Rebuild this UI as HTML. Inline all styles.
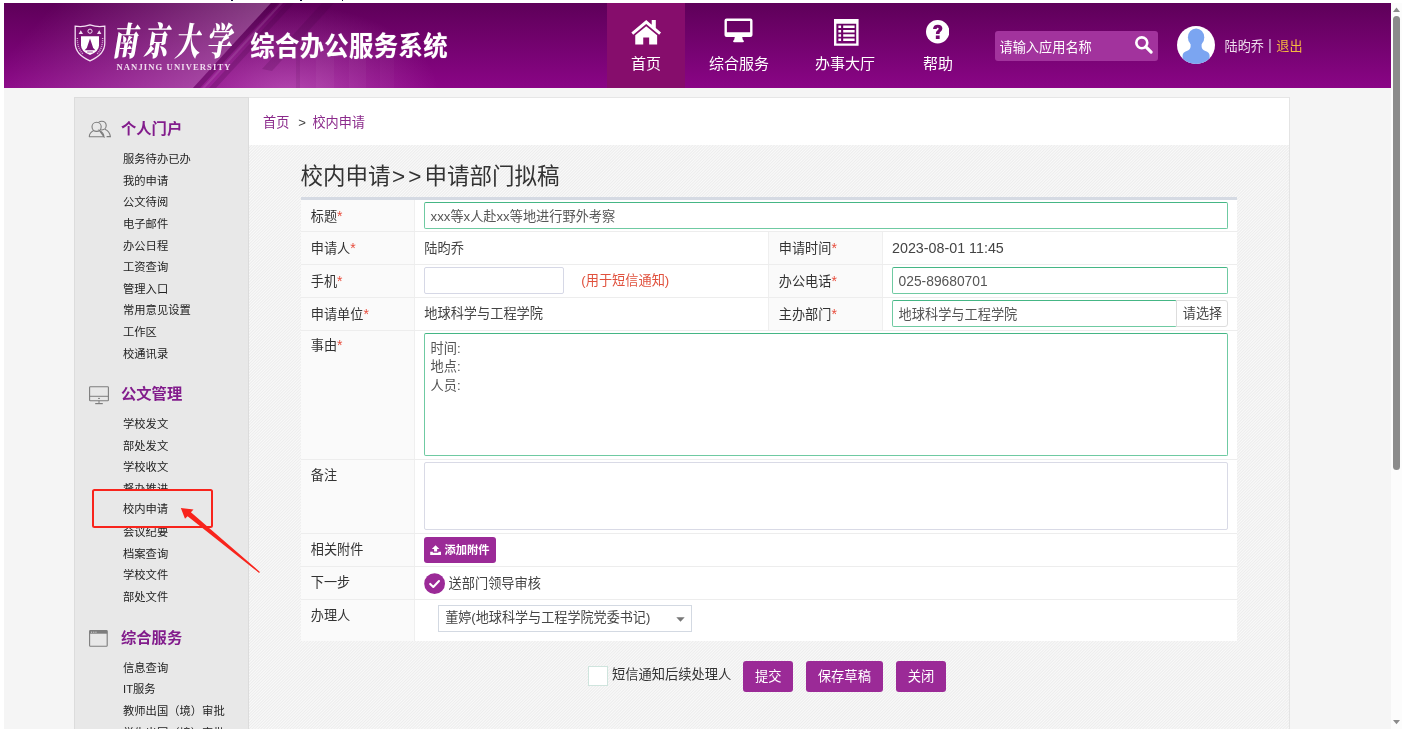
<!DOCTYPE html>
<html lang="zh-CN">
<head>
<meta charset="utf-8">
<title>综合办公服务系统</title>
<style>
*{box-sizing:border-box;margin:0;padding:0}
html,body{width:1419px;height:739px;overflow:hidden;background:#fff}
body{font-family:"Liberation Sans","Noto Sans CJK SC",sans-serif;color:#333;position:relative}
#vp{position:absolute;left:4px;top:3px;width:1387px;height:726px;background:#f5f5f5;overflow:hidden}
#all{position:absolute;left:0;top:0;width:1419px;height:739px;background:#fff;will-change:transform;overflow:hidden}
.abs{position:absolute}
/* header */
#hd{position:absolute;left:0;top:0;width:1387px;height:85px;background:linear-gradient(180deg,#5e0059 0%,#8a0586 100%);overflow:hidden}
#hd .t{position:absolute;color:#fff;white-space:nowrap}
.nav{position:absolute;top:0;height:85px;color:#fff;text-align:center;font-size:15px}
.nav span{position:absolute;left:0;right:0;top:50.7px;line-height:20px}
/* sidebar */
#sb{position:absolute;left:70px;top:94px;width:175px;height:640px;background:#e8e8e8;border:1px solid #dcdcdc}
#sb .h{position:absolute;left:46px;color:#821c8c;font-weight:bold;font-size:15.3px;line-height:20px;white-space:nowrap}
#sb .i{position:absolute;left:48px;color:#222;font-size:11.3px;line-height:16px;white-space:nowrap}
/* main */
#mn{position:absolute;left:245px;top:94px;width:1041px;height:640px;border-right:1px solid #e4e4e4;background:#f4f4f4;
 }
#bc{position:absolute;left:0;top:0;width:1040px;height:48px;background:#fff;border-top:1px solid #e6e6e6;font-size:13.15px;line-height:49px;padding-left:14px;color:#8b2a8b;white-space:nowrap}
#ttl{position:absolute;left:51.6px;top:65px;font-size:22.5px;line-height:30px;color:#333;white-space:nowrap}
#tb{position:absolute;left:52px;top:100px;width:936.4px;height:444px;background:#fff;border-top:3px solid #d5dae3}
.row{position:absolute;left:0;width:936.4px;border-bottom:1px solid #ededed}
.lb{position:absolute;top:0;bottom:0;background:#fafafa;border-right:1px solid #efefef;font-size:13.15px;padding-left:9.8px;color:#333;white-space:nowrap}
.lb b{color:#e74c3c;font-weight:normal;font-size:14px}
.v{position:absolute;font-size:13.2px;color:#444;white-space:nowrap}
.in{position:absolute;border:1px solid #6fcaa2;border-top-color:#45b685;background:#fff;border-radius:2px;font-size:13.2px;color:#555;padding-left:5.6px;white-space:nowrap}
.btn{position:absolute;background:#9b2a97;color:#fff;border-radius:3px;text-align:center;white-space:nowrap}
</style>
</head>
<body>
<div id="all">
<div id="vp">
<div id="hd">
 <svg class="abs" style="left:0;top:0" width="520" height="85" viewBox="0 0 520 85">
  <defs>
   <linearGradient id="hg1" gradientUnits="userSpaceOnUse" x1="267" y1="0" x2="149" y2="-108"><stop offset="0" stop-color="#fff" stop-opacity=".25"/><stop offset=".5" stop-color="#fff" stop-opacity=".12"/><stop offset="1" stop-color="#fff" stop-opacity="0"/></linearGradient>
   <radialGradient id="hg2" gradientUnits="userSpaceOnUse" cx="285" cy="92" r="150" gradientTransform="translate(0 36.8) scale(1 .6)"><stop offset="0" stop-color="#f4b0f0" stop-opacity=".38"/><stop offset=".55" stop-color="#f4b0f0" stop-opacity=".16"/><stop offset="1" stop-color="#f4b0f0" stop-opacity="0"/></radialGradient>
  </defs>
  <polygon points="0,0 267,0 189,85 0,85" fill="url(#hg1)"/>
  <polygon points="267,0 520,0 520,85 189,85" fill="url(#hg2)"/>
  <polygon points="267,0 274,0 196,85 189,85" fill="rgba(60,0,60,.30)"/>
  <polygon points="276,0 279,0 201,85 198,85" fill="rgba(255,255,255,.10)"/>
  <polygon points="283,0 290,0 212,85 205,85" fill="rgba(60,0,60,.20)"/>
  <polygon points="318,0 330,0 268,68 258,66" fill="rgba(60,0,60,.18)"/>
  <polygon points="292,85 292,40 296,40 296,85" fill="rgba(60,0,60,.10)"/>
  <polygon points="312,85 312,45 330,38 330,85" fill="rgba(255,255,255,.035)"/>
  <polygon points="345,85 345,42 362,36 362,85" fill="rgba(255,255,255,.03)"/>
  <polygon points="376,85 376,46 390,42 390,85" fill="rgba(255,255,255,.025)"/>
 </svg>
 <svg class="abs" style="left:70px;top:21px" width="32" height="38" viewBox="0 0 32 38">
  <path d="M1.2 2.2 Q8.5 3.6 16 0.9 Q23.5 3.6 30.8 2.2 L30.8 19 Q30.8 30.5 16 36.8 Q1.2 30.5 1.2 19 Z" fill="none" stroke="#f3dff2" stroke-width="1.3"/>
  <path d="M7 12.2 L25 12.2 L25 21.5 Q25 27.5 16 31 Q7 27.5 7 21.5 Z" fill="#fff"/>
  <path d="M16 14.5 L19.2 24 L21.4 26.2 L10.6 26.2 L12.8 24 Z" fill="#7a1478"/>
  <rect x="13.2" y="27.4" width="5.6" height="1.2" fill="#b070b0"/>
  <circle cx="16" cy="7.2" r="2.1" fill="none" stroke="#f3dff2" stroke-width="1"/>
  <path d="M4.6 10 L6.8 6.2 L9 10 Z M23 10 L25.2 6.2 L27.4 10 Z" fill="#f3dff2"/>
  <path d="M3.4 14 Q3 24 9 30 M28.6 14 Q29 24 23 30" fill="none" stroke="#d9b0d8" stroke-width="1.4" stroke-dasharray="1 1"/>
 </svg>
 <div class="t" id="cal" style="left:108px;top:19.5px;font-family:'Liberation Serif','Noto Serif CJK SC',serif;font-weight:900;font-style:italic;font-size:25px;line-height:40px;letter-spacing:6.3px;transform:scaleY(1.52);transform-origin:0 50%">南京大学</div>
 <div class="t" id="nju" style="left:112.5px;top:57.7px;font-family:'Liberation Serif',serif;font-weight:bold;font-size:8.6px;line-height:12px;letter-spacing:1.1px;color:#f0dcef">NANJING UNIVERSITY</div>
 <div class="t" id="sys" style="left:246.3px;top:26.9px;font-size:24.4px;font-weight:bold;line-height:34px;letter-spacing:.3px;transform:scaleY(1.1);transform-origin:0 50%;text-shadow:0 0 1px rgba(255,255,255,.4)">综合办公服务系统</div>

 <div class="nav" style="left:603px;width:78px;background:#860d6c">
  <svg class="abs" style="left:23.2px;top:15.6px" width="32.4" height="26.6" viewBox="0 0 31 26"><path d="M15.5 1 L1 13.2 L2.8 15.3 L15.5 4.8 L28.2 15.3 L30 13.2 L24.9 8.9 L24.9 0.9 L20.9 0.9 L20.9 5.5 Z" fill="#fff"/><path d="M15.5 7 L4.8 15.9 L4.8 25 L12.6 25 L12.6 18 L18.4 18 L18.4 25 L26.2 25 L26.2 15.9 Z" fill="#fff"/></svg>
  <span>首页</span></div>
 <div class="nav" style="left:695px;width:80px">
  <svg class="abs" style="left:24.6px;top:15.3px" width="29" height="25" viewBox="0 0 29 25"><path d="M2.6 0.5 H26.4 Q28.5 0.5 28.5 2.6 V17 Q28.5 19.1 26.4 19.1 H18.2 L18.9 22 Q19.9 22.3 19.9 23.2 Q19.9 24.2 18.9 24.2 H10.1 Q9.1 24.2 9.1 23.2 Q9.1 22.3 10.1 22 L10.8 19.1 H2.6 Q0.5 19.1 0.5 17 V2.6 Q0.5 0.5 2.6 0.5 Z M2.9 2.9 V14.3 H26.1 V2.9 Z" fill="#fff" fill-rule="evenodd"/></svg>
  <span>综合服务</span></div>
 <div class="nav" style="left:801px;width:80px">
  <svg class="abs" style="left:29.4px;top:16.2px" width="24.6" height="26.8" viewBox="0 0 24.6 26.8"><path d="M0 0 H24.6 V26.8 H0 Z M2.4 4.7 V24.4 H22.2 V4.7 Z" fill="#fff" fill-rule="evenodd"/><path d="M4.4 6.6h2.7v2.5h-2.7z M9.2 6.6h11.4v2.5H9.2z M4.4 10.9h2.7v2.5h-2.7z M9.2 10.9h11.4v2.5H9.2z M4.4 15.2h2.7v2.5h-2.7z M9.2 15.2h11.4v2.5H9.2z M4.4 19.6h2.7v2.5h-2.7z M9.2 19.6h11.4v2.5H9.2z " fill="#fff"/></svg>
  <span>办事大厅</span></div>
 <div class="nav" style="left:894px;width:80px">
  <svg class="abs" style="left:28px;top:17.3px" width="23.4" height="23.4" viewBox="0 0 24 24"><circle cx="12" cy="12" r="12" fill="#fff"/><path d="M7.2 9.3 Q7.4 4.9 12.1 4.9 Q16.8 4.9 16.8 8.8 Q16.8 10.9 14.9 12 Q13.9 12.6 13.9 13.7 V14.4 H10.2 V13.4 Q10.2 11.4 11.9 10.4 Q13 9.8 13 8.9 Q13 8 12 8 Q11 8 10.9 9.3 Z M10.1 15.9 H14 V19.6 H10.1 Z" fill="#74086f"/></svg>
  <span>帮助</span></div>

 <div class="abs" style="left:991px;top:28.4px;width:163px;height:29.7px;background:#a2339d;border-radius:3px"></div>
 <div class="t" style="left:995.5px;top:36px;font-size:13.2px;line-height:18px">请输入应用名称</div>
 <svg class="abs" style="left:1130px;top:32.4px" width="19.5" height="19.5" viewBox="0 0 20 20"><circle cx="8" cy="8" r="5.6" fill="none" stroke="#fff" stroke-width="2.7"/><path d="M12.2 12.2 L17.6 17.6" stroke="#fff" stroke-width="3.2" stroke-linecap="round"/></svg>
 <svg class="abs" style="left:1172.8px;top:22.8px" width="38" height="38" viewBox="0 0 38 38"><defs><clipPath id="avc"><circle cx="19" cy="19" r="19"/></clipPath></defs><circle cx="19" cy="19" r="19" fill="#fff"/><g clip-path="url(#avc)" fill="#7ba5f1"><ellipse cx="19.1" cy="11.4" rx="8.2" ry="8.9"/><path d="M13.6 16 H24.6 V20.5 Q24.8 23.6 28.4 24.9 Q32.4 26.2 32.6 29.5 V40 H5.6 V29.5 Q5.8 26.2 9.8 24.9 Q13.4 23.6 13.6 20.5 Z"/></g></svg>
 <div class="t" style="left:1220.6px;top:34px;font-size:13.1px;line-height:18px;color:#ecdbeb">陆昀乔<span style="color:#d4bcdc;font-size:15px;margin:0 4.4px 0 4.2px;position:relative;top:-1px">|</span><span style="color:#f6b840">退出</span></div>
</div>
<div id="sb">
<div class="h" style="top:21.3px">个人门户</div><svg class="abs" style="left:12.6px;top:22px" width="24" height="18" viewBox="0 0 24 18"><g fill="none" stroke="#7d7d7d" stroke-width="1.1"><circle cx="13.8" cy="5.6" r="4.4"/><path d="M16.8 9.2 Q21.6 11 22.4 16.6 H18.6"/><circle cx="8.6" cy="6.8" r="4.6" fill="#e8e8e8"/><path d="M1.2 16.8 Q1.6 12.4 5.8 10.6 M11.4 10.6 Q15.6 12.4 16 16.8 Z M1 16.8 H16.2"/></g></svg>
<div class="i" style="top:53.0px">服务待办已办</div>
<div class="i" style="top:74.7px">我的申请</div>
<div class="i" style="top:96.3px">公文待阅</div>
<div class="i" style="top:118.0px">电子邮件</div>
<div class="i" style="top:139.6px">办公日程</div>
<div class="i" style="top:161.2px">工资查询</div>
<div class="i" style="top:182.8px">管理入口</div>
<div class="i" style="top:204.4px">常用意见设置</div>
<div class="i" style="top:226.0px">工作区</div>
<div class="i" style="top:247.7px">校通讯录</div>
<div class="h" style="top:286.4px">公文管理</div><svg class="abs" style="left:14.2px;top:288px" width="20" height="19" viewBox="0 0 20 19"><g fill="none" stroke="#7d7d7d" stroke-width="1.1"><rect x="0.6" y="0.7" width="18.8" height="14" rx="0.8"/><path d="M0.6 10.3 H19.4 M10 14.7 V17.4" stroke-width="1"/><path d="M6.2 17.6 H13.8" stroke-width="1.2"/></g><ellipse cx="10" cy="12.4" rx="1" ry=".6" fill="#7d7d7d"/></svg>
<div class="i" style="top:318.2px">学校发文</div>
<div class="i" style="top:339.8px">部处发文</div>
<div class="i" style="top:361.4px">学校收文</div>
<div class="i" style="top:383.0px">督办推进</div>
<div class="i" style="top:404.6px">校内申请</div>
<div class="i" style="top:426.2px">会议纪要</div>
<div class="i" style="top:447.8px">档案查询</div>
<div class="i" style="top:469.4px">学校文件</div>
<div class="i" style="top:491.0px">部处文件</div>
<div class="h" style="top:530.0px">综合服务</div><svg class="abs" style="left:14.1px;top:532.2px" width="18.8" height="16.8" viewBox="0 0 18.8 16.8"><rect x="0.6" y="0.6" width="17.6" height="15.6" rx="0.8" fill="none" stroke="#7d7d7d" stroke-width="1.1"/><rect x="0.6" y="0.6" width="17.6" height="3.1" fill="#7d7d7d"/><path d="M2 2.2h1.1M4.2 2.2h1.1M6.4 2.2h1.1" stroke="#e8e8e8" stroke-width=".9"/></svg>
<div class="i" style="top:561.8px">信息查询</div>
<div class="i" style="top:583.4px">IT服务</div>
<div class="i" style="top:605.0px">教师出国（境）审批</div>
<div class="i" style="top:626.6px">学生出国（境）审批</div>
</div>
<div id="mn">
<svg class="abs" style="left:0;top:48px" width="1040" height="592"><defs><pattern id="ht" width="73" height="73" patternUnits="userSpaceOnUse"><rect width="73" height="73" fill="#fafafa"/><path d="M1.00 -1L-1 1.00M3.92 -1L-1 3.92M6.84 -1L-1 6.84M9.76 -1L-1 9.76M12.68 -1L-1 12.68M15.60 -1L-1 15.60M18.52 -1L-1 18.52M21.44 -1L-1 21.44M24.36 -1L-1 24.36M27.28 -1L-1 27.28M30.20 -1L-1 30.20M33.12 -1L-1 33.12M36.04 -1L-1 36.04M38.96 -1L-1 38.96M41.88 -1L-1 41.88M44.80 -1L-1 44.80M47.72 -1L-1 47.72M50.64 -1L-1 50.64M53.56 -1L-1 53.56M56.48 -1L-1 56.48M59.40 -1L-1 59.40M62.32 -1L-1 62.32M65.24 -1L-1 65.24M68.16 -1L-1 68.16M71.08 -1L-1 71.08M74.00 -1L-1 74.00M76.92 -1L-1 76.92M79.84 -1L-1 79.84M82.76 -1L-1 82.76M85.68 -1L-1 85.68M88.60 -1L-1 88.60M91.52 -1L-1 91.52M94.44 -1L-1 94.44M97.36 -1L-1 97.36M100.28 -1L-1 100.28M103.20 -1L-1 103.20M106.12 -1L-1 106.12M109.04 -1L-1 109.04M111.96 -1L-1 111.96M114.88 -1L-1 114.88M117.80 -1L-1 117.80M120.72 -1L-1 120.72M123.64 -1L-1 123.64M126.56 -1L-1 126.56M129.48 -1L-1 129.48M132.40 -1L-1 132.40M135.32 -1L-1 135.32M138.24 -1L-1 138.24M141.16 -1L-1 141.16M144.08 -1L-1 144.08M147.00 -1L-1 147.00" stroke="#ededed" stroke-width="1.03" fill="none"/></pattern></defs><rect width="1040" height="592" fill="url(#ht)"/></svg>
 <div id="bc">首页<span style="color:#444;margin:0 6.4px 0 9px">&gt;</span>校内申请</div>
 <div id="ttl">校内申请<span style="margin-left:1.5px;letter-spacing:3.0px">&gt;&gt;</span>申请部门拟稿</div>
 <div id="tb">
<div class="row" style="top:0px;height:32px;">
 <div class="lb" style="left:0;width:114px;line-height:32px">标题<b>*</b></div>
</div>
<div class="row" style="top:32px;height:33px;">
 <div class="lb" style="left:0;width:114px;line-height:32px">申请人<b>*</b></div>
 <div class="lb" style="left:467px;width:115px;line-height:32px;border-left:1px solid #efefef;padding-left:9.8px">申请时间<b>*</b></div>
</div>
<div class="row" style="top:65px;height:33px;">
 <div class="lb" style="left:0;width:114px;line-height:32px">手机<b>*</b></div>
 <div class="lb" style="left:467px;width:115px;line-height:32px;border-left:1px solid #efefef;padding-left:9.8px">办公电话<b>*</b></div>
</div>
<div class="row" style="top:98px;height:33px;">
 <div class="lb" style="left:0;width:114px;line-height:32px">申请单位<b>*</b></div>
 <div class="lb" style="left:467px;width:115px;line-height:32px;border-left:1px solid #efefef;padding-left:9.8px">主办部门<b>*</b></div>
</div>
<div class="row" style="top:131px;height:129px;">
 <div class="lb" style="left:0;width:114px;line-height:29.4px">事由<b>*</b></div>
</div>
<div class="row" style="top:260px;height:74px;">
 <div class="lb" style="left:0;width:114px;line-height:32.6px">备注</div>
</div>
<div class="row" style="top:334px;height:33px;">
 <div class="lb" style="left:0;width:114px;line-height:32px">相关附件</div>
</div>
<div class="row" style="top:367px;height:33px;">
 <div class="lb" style="left:0;width:114px;line-height:32px">下一步</div>
</div>
<div class="row" style="top:400px;height:41px;border-bottom:0;">
 <div class="lb" style="left:0;width:114px;line-height:32px">办理人</div>
</div>
<div class="in" style="left:123px;top:2px;width:804px;height:27px;line-height:27.6px;">xxx等x人赴xx等地进行野外考察</div>
<div class="v" style="left:123.3px;top:38.6px;line-height:20px;">陆昀乔</div>
<div class="v" style="left:591.0px;top:38.4px;line-height:20px;font-size:14.3px;color:#444">2023-08-01 11:45</div>
<div class="in" style="left:123px;top:67px;width:140px;height:27px;line-height:27.6px;border-color:#d6d8e6;box-shadow:none"></div>
<div class="v" style="left:280.3px;top:71.4px;line-height:20px;color:#e0513d">(用于短信通知)</div>
<div class="in" style="left:591px;top:67px;width:336px;height:27px;line-height:27.6px;font-size:13.8px">025-89680701</div>
<div class="v" style="left:123.3px;top:104.0px;line-height:20px;">地球科学与工程学院</div>
<div class="in" style="left:591px;top:100px;width:285px;height:27px;line-height:27.6px;">地球科学与工程学院</div>
<div class="abs" style="left:875px;top:100px;width:52px;height:27px;border:1px solid #ddd;border-radius:0 3px 3px 0;background:#fff;font-size:13.1px;line-height:26px;text-align:center;color:#444;white-space:nowrap;padding-left:1px">请选择</div>
<div class="in" style="left:123px;top:133px;width:804px;height:123px;padding-top:5.6px;line-height:18.6px;font-size:13.2px">时间:<br>地点:<br>人员:</div>
<div class="in" style="left:123px;top:262px;width:804px;height:68px;border-color:#d9dae6;box-shadow:none"></div>
<div class="btn" style="left:123.39999999999998px;top:337px;width:71.5px;height:26.2px;font-size:11.25px;line-height:26px;font-weight:bold;text-align:left;padding-left:20.2px"><svg class="abs" style="left:5.6px;top:7.9px" width="11.2" height="10.2" viewBox="0 0 11 10"><path d="M5.5 0.2 L9.2 4 H7 V6.4 H4 V4 H1.8 Z M0.2 6.6 H2.8 V7.6 H8.2 V6.6 H10.8 V9.8 H0.2 Z" fill="#fff"/></svg>添加附件</div>
<svg class="abs" style="left:123px;top:372.6px" width="22" height="22" viewBox="0 0 22 22"><circle cx="10.6" cy="10.7" r="10.4" fill="#9b2a97"/><path d="M6.2 10.9 L9.3 13.9 L15 8" fill="none" stroke="#fff" stroke-width="2.1" stroke-linecap="round" stroke-linejoin="round"/></svg>
<div class="v" style="left:147.6px;top:373.6px;line-height:20px;">送部门领导审核</div>
<div class="abs" style="left:137px;top:405px;width:253.5px;height:27px;border:1px solid #d3d9e2;background:#fff;font-size:13.1px;line-height:24.6px;padding-left:6.2px;color:#444;white-space:nowrap">董婷(地球科学与工程学院党委书记)<svg class="abs" style="left:236.5px;top:10.6px" width="9" height="5" viewBox="0 0 9 5"><path d="M0.3 0.2 H8.7 L4.5 4.8 Z" fill="#777"/></svg></div>
</div>
<div class="abs" style="left:339px;top:569px;width:20px;height:20px;background:#fff;border:1px solid #cfe4dd"></div>
<div class="abs" style="left:363.0px;top:568.0px;font-size:13.25px;line-height:20px;color:#333;white-space:nowrap">短信通知后续处理人</div>
<div class="btn" style="left:494.0px;top:564.0px;width:50.4px;height:31px;font-size:13.3px;line-height:31px">提交</div>
<div class="btn" style="left:557.0px;top:564.0px;width:76.7px;height:31px;font-size:13.3px;line-height:31px">保存草稿</div>
<div class="btn" style="left:647.0px;top:564.0px;width:50.0px;height:31px;font-size:13.3px;line-height:31px">关闭</div>
</div>
</div>
<!-- scrollbar -->
<div class="abs" style="left:1391px;top:3px;width:10.8px;height:725.7px;background:#fcfcfc"></div>
<div class="abs" style="left:1393px;top:16px;width:7px;height:453.8px;background:#8b8b8b;border-radius:3.5px"></div>
<svg class="abs" style="left:1392px;top:6px" width="9" height="8" viewBox="0 0 9 8"><path d="M4.5 1.4 L8 6 H1 Z" fill="#8b8b8b"/></svg>
<svg class="abs" style="left:1392px;top:718px" width="9" height="8" viewBox="0 0 9 8"><path d="M1 2 H8 L4.5 6.3 Z" fill="#8b8b8b"/></svg>
<!-- crop remnants -->
<div class="abs" style="left:231px;top:0;width:1.5px;height:1.2px;background:#1a1440"></div>
<div class="abs" style="left:300px;top:0;width:1.5px;height:1.2px;background:#1a1440"></div>
<div class="abs" style="left:341.8px;top:0;width:1.5px;height:1.2px;background:#1a1440"></div>
<!-- annotation -->
<div class="abs" style="left:92px;top:488.7px;width:121px;height:39.5px;border:2px solid #f8241c;border-radius:2.5px;background:#e8e8e8"></div>
<div class="abs" style="left:122.9px;top:501.2px;font-size:11.3px;line-height:16px;color:#222;white-space:nowrap">校内申请</div>
<svg class="abs" style="left:170px;top:500px" width="100" height="80" viewBox="170 500 100 80"><polygon points="180.8,507.9 193.5,509.6 190.9,512.2 259.9,571.9 259.1,572.9 187.6,516.2 185,518.8" fill="#f8241c"/></svg>
</div>
</body>
</html>
